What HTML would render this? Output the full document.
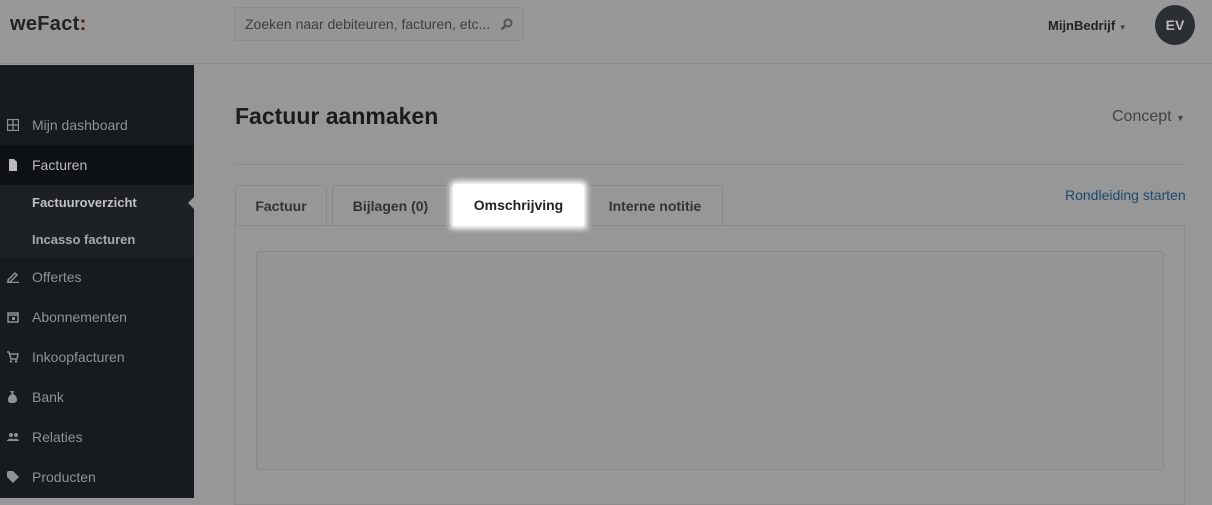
<!DOCTYPE html>
<html><head><style>
*{box-sizing:border-box;margin:0;padding:0}
body{width:1212px;height:498px;overflow:hidden;background:#979797;font-family:"Liberation Sans",Arial,sans-serif;position:relative}
.hdr{position:absolute;left:0;top:0;width:1212px;height:64px;border-bottom:1px solid #8a8a8a;background:#989898}
.logo{position:absolute;left:10px;top:13px;font-size:20px;font-weight:bold;color:#222;letter-spacing:0.3px}
.logo span{color:#5a1414}
.search{position:absolute;left:234px;top:7px;width:290px;height:34px;border:1px solid #8c8c8c;border-radius:3px;background:#959595;font-size:14px;color:#3e3e3e;padding:8px 10px}
.user{position:absolute;left:1048px;top:18px;font-size:13px;font-weight:bold;color:#222}
.av{position:absolute;left:1155px;top:5px;width:40px;height:40px;border-radius:50%;background:#2b2e33;color:#bbb;font-weight:bold;font-size:14px;text-align:center;line-height:40px}
.side{position:absolute;left:0;top:65px;width:194px;height:433px;background:#171b1f}
.it{position:absolute;left:0;width:194px;height:40px;color:#8e9196;font-size:14px;line-height:40px;padding-left:32px}
.ic{position:absolute;left:7px;top:14px;width:12px;height:12px}
.sub{position:absolute;left:0;top:120px;width:194px;height:72px;background:#1d2126}
.sub div{position:absolute;left:32px;font-size:13px;font-weight:bold;color:#a6a8ab}
h1{position:absolute;left:235px;top:103px;font-size:23px;color:#1c1c1c;font-weight:bold}
.concept{position:absolute;left:1112px;top:108px;font-size:16px;color:#444}
.line{position:absolute;left:234px;top:164px;width:950px;height:1px;background:#8b8b8b}
.tab{position:absolute;top:185px;height:41px;border:1px solid #898989;border-bottom:none;border-radius:3px 3px 0 0;font-size:14px;font-weight:bold;color:#333;text-align:center;line-height:40px}
.box{position:absolute;left:234px;top:225px;width:951px;height:280px;border:1px solid #8b8b8b}
.ta{position:absolute;left:256px;top:251px;width:908px;height:219px;border:1px solid #888;border-radius:3px;background:#959595}
.rl{position:absolute;left:1065px;top:187px;font-size:14px;color:#1c4a6e}
</style></head><body>
<div class="hdr">
<div class="logo">weFact<span>:</span></div>
<div class="search">Zoeken naar debiteuren, facturen, etc...
<svg style="position:absolute;right:10px;top:10px" width="13" height="13" viewBox="0 0 13 13"><circle cx="8" cy="5" r="3.5" fill="none" stroke="#555" stroke-width="2"/><path d="M5.5 7.5L1.5 11.5" stroke="#555" stroke-width="2.5"/></svg></div>
<div class="user">MijnBedrijf <span style="font-size:8px;color:#444">▼</span></div>
<div class="av">EV</div>
</div>
<div class="side">
<div class="it" style="top:40px"><svg class="ic" viewBox="0 0 12 12"><path d="M0.5 0.5h11v11h-11zM6 0.5v11M0.5 6h11" fill="none" stroke="#8e9196" stroke-width="1.3"/></svg>Mijn dashboard</div>
<div class="it" style="top:80px;background:#0f1215;color:#b8babd"><svg class="ic" viewBox="0 0 12 12"><path d="M2 0h5l3 3v9h-8z" fill="#b8babd"/></svg>Facturen</div>
<div class="sub"><div style="top:10px;color:#bfc1c4">Factuuroverzicht</div><div style="top:47px">Incasso facturen</div>
<div style="left:188px;top:12px;width:0;height:0;border:6px solid transparent;border-right-color:#979797;border-left:none"></div></div>
<div class="it" style="top:192px"><svg class="ic" viewBox="0 0 12 12"><path d="M1 9L8 2l2 2-7 7H1zM0 11.5h13" fill="none" stroke="#8e9196" stroke-width="1.5"/></svg>Offertes</div>
<div class="it" style="top:232px"><svg class="ic" viewBox="0 0 12 12"><path d="M1 2h10v9H1zM1 4h10" fill="none" stroke="#8e9196" stroke-width="1.5"/><rect x="5" y="6" width="3" height="3" fill="#8e9196"/></svg>Abonnementen</div>
<div class="it" style="top:272px"><svg class="ic" viewBox="0 0 12 12"><path d="M0 1h2l2 7h6l1-5H3" fill="none" stroke="#8e9196" stroke-width="1.5"/><circle cx="4" cy="10.5" r="1.2" fill="#8e9196"/><circle cx="9" cy="10.5" r="1.2" fill="#8e9196"/></svg>Inkoopfacturen</div>
<div class="it" style="top:312px"><svg class="ic" viewBox="0 0 12 12"><path d="M3 0h4l-1 3c3 1 4 4 4 6 0 2-2 3-5 3S1 11 1 9c0-2 1-5 4-6z" fill="#8e9196"/></svg>Bank</div>
<div class="it" style="top:352px"><svg class="ic" viewBox="0 0 12 12"><circle cx="4" cy="4" r="2" fill="#8e9196"/><circle cx="9" cy="4" r="2" fill="#8e9196"/><path d="M0 10c0-3 8-3 8 0zM6 10c0-3 6-3 6 0z" fill="#8e9196"/></svg>Relaties</div>
<div class="it" style="top:392px"><svg class="ic" viewBox="0 0 12 12"><path d="M0 1v5l6 6 6-6-6-6H1z" fill="#8e9196"/></svg>Producten</div>
</div>
<h1>Factuur aanmaken</h1>
<div class="concept">Concept <span style="font-size:9px">▼</span></div>
<div class="line"></div>
<div class="rl">Rondleiding starten</div>
<div class="box"></div>
<div class="tab" style="left:235px;width:92px">Factuur</div>
<div class="tab" style="left:332px;width:117px">Bijlagen (0)</div>
<div class="tab" style="left:587px;width:136px">Interne notitie</div>
<div class="tab" style="left:453px;top:184px;width:131px;height:42px;line-height:43px;background:#fff;border:none;box-shadow:0 0 6px 3px #fff;color:#222">Omschrijving</div>
<div class="ta"></div>
</body></html>
